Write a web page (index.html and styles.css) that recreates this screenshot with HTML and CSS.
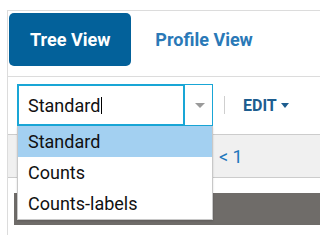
FILE: index.html
```html
<!DOCTYPE html>
<html>
<head>
<meta charset="utf-8">
<link rel="stylesheet" href="styles.css">
</head>
<body>
<div class="panel">
  <div class="tabs">
    <div class="tab tab-active">Tree View</div>
    <div class="tab">Profile View</div>
  </div>
  <div class="toolbar">
    <div class="combo">
      <div class="combo-input">Standard<span class="cursor"></span></div>
      <div class="combo-arrow"><span class="tri"></span></div>
    </div>
    <div class="sep"></div>
    <div class="edit">EDIT<span class="edit-tri"></span></div>
  </div>
  <div class="pager"><span class="pager-text">&lt; 1</span></div>
  <div class="dark"></div>
  <ul class="dropdown">
    <li class="item item-selected">Standard</li>
    <li class="item">Counts</li>
    <li class="item">Counts-labels</li>
  </ul>
</div>
</body>
</html>
```

FILE: styles.css
```css
html, body {
  margin: 0;
  padding: 0;
  background: #fff;
  font-family: Roboto, "Liberation Sans", sans-serif;
  overflow: hidden;
}

.panel {
  position: relative;
  margin: 10px 0 0 7px;
  border-left: 1px solid #dcdcdc;
  border-top: 1px solid #dcdcdc;
  padding-bottom: 10px;
}

.tabs {
  display: flex;
  padding: 2px 0 10px 1px;
  border-bottom: 1px solid #dcdcdc;
}

.tab {
  height: 53px;
  display: flex;
  align-items: center;
  padding: 0 21px;
  border-radius: 5px;
  font-size: 18px;
  font-weight: 700;
  color: #2a79b7;
}

.tab + .tab {
  margin-left: 3px;
}

.tab-active {
  background: #03619a;
  color: #fff;
}

.toolbar {
  display: flex;
  align-items: center;
  padding: 7px 0 0 9px;
}

.combo {
  display: flex;
  height: 42px;
}

.combo-input {
  box-sizing: border-box;
  width: 168px;
  height: 42px;
  border: 2px solid #19a6d6;
  padding-left: 9px;
  display: flex;
  align-items: center;
  font-size: 18px;
  color: #111;
}

.cursor {
  display: inline-block;
  width: 1px;
  height: 17px;
  background: #000;
  margin-left: 1px;
}

.combo-arrow {
  box-sizing: border-box;
  width: 28px;
  height: 42px;
  border: 1px solid #19a6d6;
  border-left: none;
  display: flex;
  align-items: center;
  justify-content: center;
}

.tri {
  width: 0;
  height: 0;
  border-left: 5px solid transparent;
  border-right: 5px solid transparent;
  border-top: 5px solid #9a9a9a;
  margin-left: 2px;
}

.sep {
  width: 1px;
  height: 18px;
  background: #cfcfcf;
  margin: 0 18px 0 11px;
}

.edit {
  display: flex;
  align-items: center;
  font-size: 16px;
  font-weight: 700;
  color: #1d5d8f;
}

.edit-tri {
  width: 0;
  height: 0;
  border-left: 4.5px solid transparent;
  border-right: 4.5px solid transparent;
  border-top: 5px solid #1d5d8f;
  margin-left: 4px;
}

.pager {
  margin-top: 8px;
  height: 42px;
  border-top: 1px solid #cccccc;
  border-bottom: 1px solid #cccccc;
  background: #f0f0f0;
  display: flex;
  align-items: center;
  padding-left: 211px;
}

.pager-text {
  font-size: 18px;
  color: #1f77bc;
}

.dark {
  margin: 15px 0 0 6px;
  height: 32px;
  background: #6f6c69;
}

.dropdown {
  position: absolute;
  left: 9px;
  top: 115px;
  box-sizing: border-box;
  width: 196px;
  margin: 0;
  padding: 0;
  list-style: none;
  background: #fff;
  border: 1px solid #c8c8c8;
  border-top: none;
  box-shadow: 0 1px 2px rgba(0, 0, 0, 0.15);
}

.item {
  height: 31px;
  display: flex;
  align-items: center;
  padding-left: 10px;
  font-size: 18px;
  color: #111;
}

.item-selected {
  background: #a3d0f1;
}
```
